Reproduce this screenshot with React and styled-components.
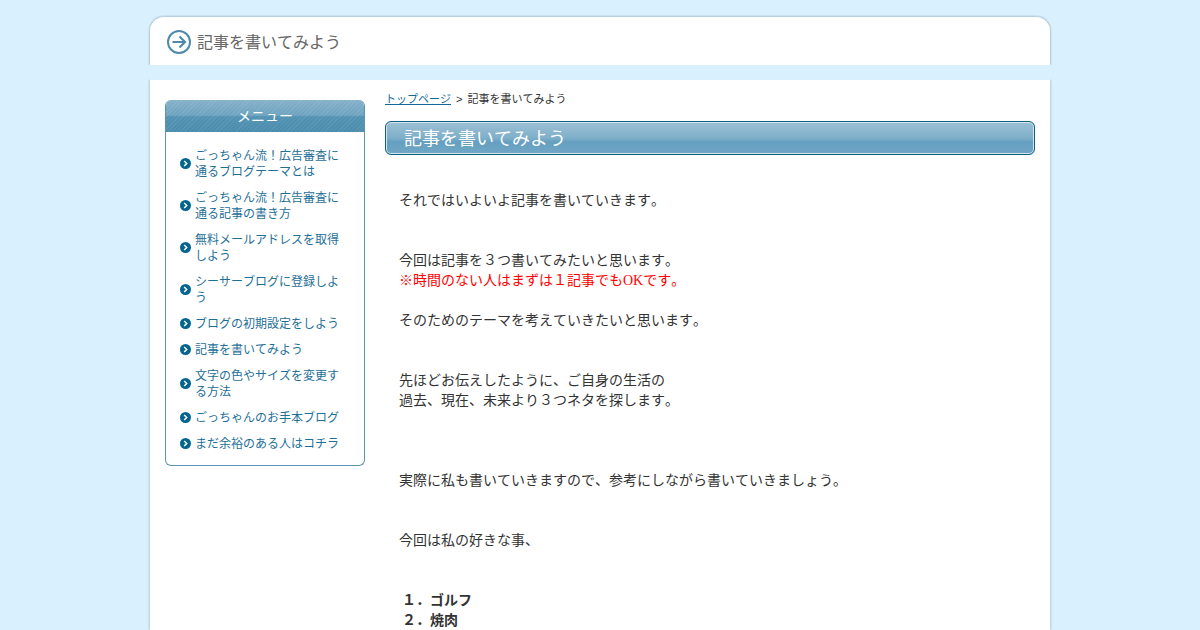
import React from 'react';
import styled, { createGlobalStyle } from 'styled-components';

const GlobalStyle = createGlobalStyle`
  html, body {
    margin: 0;
    padding: 0;
    height: 630px;
    overflow: hidden;
    background: #d9f1ff;
    font-family: 'Liberation Sans', 'Noto Sans CJK JP', sans-serif;
    font-kerning: none;
    text-spacing-trim: space-all;
  }
  ul { margin: 0; padding: 0; list-style: none; }
`;

const Page = styled.div`
  width: 900px;
  margin: 0 auto;
  padding-top: 17px;
`;

const TopBar = styled.header`
  height: 48px;
  display: flex;
  align-items: center;
  gap: 6px;
  padding-left: 17px;
  background: #fff;
  border-radius: 14px 14px 0 0;
  box-shadow: 0 -1px 2px #b4cbd8, 1px 0 2px #b4cbd8, -1px 0 2px #b4cbd8;
`;

const SiteTitle = styled.h1`
  margin: 0;
  font-size: 16px;
  font-weight: normal;
  color: #666;
`;

const IconSlot = styled.span`
  display: flex;
  margin-top: 2px;
`;

const Band = styled.div`
  height: 15px;
  background: #d9f1ff;
  position: relative;
`;

const Body = styled.div`
  display: flex;
  gap: 20px;
  padding: 0 15px;
  height: 550px;
  background: #fff;
  box-shadow: 1px 0 2px #b4cbd8, -1px 0 2px #b4cbd8;
`;

const Sidebar = styled.aside`
  width: 200px;
  flex: none;
  padding-top: 20px;
`;

const MenuBox = styled.nav`
  border: 1px solid #5d93ae;
  border-top: 0;
  border-radius: 6px;
  overflow: hidden;
`;

const MenuTitle = styled.h3`
  margin: 0 -1px;
  height: 32px;
  line-height: 32px;
  text-align: center;
  font-size: 14px;
  font-weight: normal;
  color: #fff;
  background:
    repeating-linear-gradient(135deg, rgba(255,255,255,0.07) 0 1px, transparent 1px 3px),
    linear-gradient(#86b1c9 0%, #6ea3c0 48%, #5292b3 52%, #4c8cad 100%);
`;

const MenuList = styled.ul`
  display: flex;
  flex-direction: column;
  gap: 10px;
  padding: 15px 14px 14px;
`;

const MenuItem = styled.li`
  display: flex;
  align-items: center;
  gap: 4px;
  font-size: 12px;
  line-height: 16px;
`;

const MenuLink = styled.a`
  width: 150px;
  padding-top: 1px;
  margin-bottom: -1px;
  color: #1f6f97;
  text-decoration: none;
`;

const Main = styled.main`
  flex: 1;
  min-width: 0;
`;

const Crumbs = styled.div`
  height: 41px;
  padding-top: 12px;
  box-sizing: border-box;
  font-size: 11px;
  line-height: 15px;
  color: #333;
`;

const CrumbLink = styled.a`
  color: #0f6a96;
  text-decoration: underline;
`;

const CrumbSep = styled.span`
  margin: 0 5px;
`;

const Heading = styled.h2`
  margin: 0 0 35px;
  height: 34px;
  box-sizing: border-box;
  padding-left: 18px;
  line-height: 34px;
  font-size: 18px;
  font-weight: normal;
  color: #fff;
  border: 1px solid #0f5f82;
  border-radius: 6px;
  box-shadow: inset 0 0 0 1px #d6e6ef;
  background: linear-gradient(#9cc0d4 0%, #7fafc9 50%, #659fc0 62%, #72a7c5 100%);
`;

const Article = styled.div`
  padding-left: 14px;
  font-size: 14px;
  line-height: 20px;
  color: #333;
`;

const Para = styled.p`
  margin: 0 0 ${p => p.$after || 0}px;
  padding-left: ${p => p.$indent || 0}px;
`;

const Red = styled.span`
  display: block;
  height: 19px;
  padding-top: 1px;
  color: #f00;
  font-family: 'Liberation Serif', 'Noto Sans CJK JP', serif;
`;

const menu = [
  'ごっちゃん流！広告審査に通るブログテーマとは',
  'ごっちゃん流！広告審査に通る記事の書き方',
  '無料メールアドレスを取得しよう',
  'シーサーブログに登録しよう',
  'ブログの初期設定をしよう',
  '記事を書いてみよう',
  '文字の色やサイズを変更する方法',
  'ごっちゃんのお手本ブログ',
  'まだ余裕のある人はコチラ',
];

function ArrowIcon() {
  return (
    <svg width="24" height="24" viewBox="0 0 24 24" fill="none" stroke="#4f8aab">
      <circle cx="12" cy="12" r="11" strokeWidth="2" />
      <path d="M5.5 12h12M12.5 6.5l5.5 5.5-5.5 5.5" strokeWidth="2.2" />
    </svg>
  );
}

function Bullet() {
  return (
    <svg width="11" height="11" viewBox="0 0 11 11" style={{ flex: 'none' }}>
      <circle cx="5.5" cy="5.5" r="5.5" fill="#06658f" />
      <path d="M4.2 3l2.5 2.5L4.2 8" fill="none" stroke="#fff" strokeWidth="1.5" />
    </svg>
  );
}

export default function App() {
  return (
    <Page>
      <GlobalStyle />
      <TopBar>
        <IconSlot><ArrowIcon /></IconSlot>
        <SiteTitle>記事を書いてみよう</SiteTitle>
      </TopBar>
      <Band />
      <Body>
        <Sidebar>
          <MenuBox>
            <MenuTitle>メニュー</MenuTitle>
            <MenuList>
              {menu.map(item => (
                <MenuItem key={item}>
                  <Bullet />
                  <MenuLink>{item}</MenuLink>
                </MenuItem>
              ))}
            </MenuList>
          </MenuBox>
        </Sidebar>
        <Main>
          <Crumbs>
            <CrumbLink>トップページ</CrumbLink><CrumbSep>&gt;</CrumbSep>記事を書いてみよう
          </Crumbs>
          <Heading>記事を書いてみよう</Heading>
          <Article>
            <Para $after={40}>それではいよいよ記事を書いていきます。</Para>
            <Para $after={20}>
              今回は記事を３つ書いてみたいと思います。<br />
              <Red>※時間のない人はまずは１記事でもOKです。</Red>
            </Para>
            <Para $after={40}>そのためのテーマを考えていきたいと思います。</Para>
            <Para $after={60}>
              先ほどお伝えしたように、ご自身の生活の<br />
              過去、現在、未来より３つネタを探します。
            </Para>
            <Para $after={40}>実際に私も書いていきますので、参考にしながら書いていきましょう。</Para>
            <Para $after={40}>今回は私の好きな事、</Para>
            <Para $indent={3}><strong>１．ゴルフ<br />２．焼肉</strong></Para>
          </Article>
        </Main>
      </Body>
    </Page>
  );
}
